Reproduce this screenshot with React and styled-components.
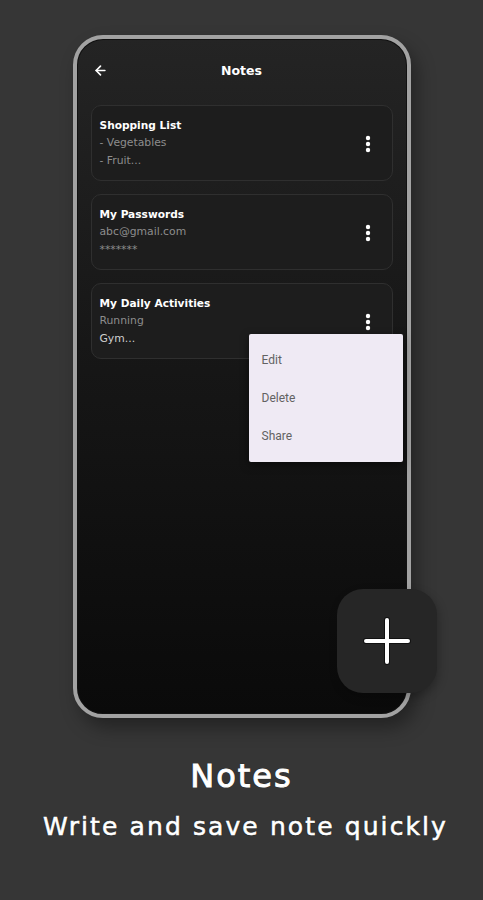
import React from "react";
import styled, { createGlobalStyle } from "styled-components";
import { ArrowLeft } from "lucide-react";

const Global = createGlobalStyle`
  html, body { margin: 0; padding: 0; background: #363636; }
  body { width: 483px; height: 900px; overflow: hidden; font-family: "DejaVu Sans", sans-serif; }
`;

const Page = styled.div`
  width: 483px;
  height: 900px;
  background: #363636;
  display: flex;
  flex-direction: column;
  align-items: center;
  padding-top: 35px;
  box-sizing: border-box;
`;

const PhoneWrap = styled.div`
  position: relative;
  width: 338px;
  height: 683px;
`;

const Phone = styled.div`
  position: relative;
  width: 100%;
  height: 100%;
  box-sizing: border-box;
  border: 4px solid #a2a2a2;
  border-radius: 30px;
  background: linear-gradient(180deg, #242424 0%, #171717 45%, #0a0a0a 100%);
  box-shadow: inset 0 0 0 1px #111, 6px 10px 18px rgba(0, 0, 0, 0.35);
  display: flex;
  flex-direction: column;
`;

const Header = styled.div`
  height: 62px;
  display: flex;
  align-items: center;
  justify-content: center;
  position: relative;
  color: #fff;
`;

const BackBtn = styled.div`
  position: absolute;
  left: 16px;
  top: 24px;
  display: flex;
  color: #fff;
`;

const HeaderTitle = styled.div`
  font-family: "DejaVu Sans", sans-serif;
  font-weight: 700;
  font-size: 12.5px;
  color: #fff;
`;

const List = styled.div`
  display: flex;
  flex-direction: column;
  gap: 13px;
  padding: 4px 14px 0;
`;

const Card = styled.div`
  display: flex;
  align-items: center;
  justify-content: space-between;
  background: #1d1d1d;
  border: 1px solid #2f2f2f;
  border-radius: 10px;
  padding: 11px 20px 10px 8px;
`;

const CardText = styled.div`
  display: flex;
  flex-direction: column;
`;

const CardTitle = styled.div`
  font-family: "DejaVu Sans", sans-serif;
  font-weight: 700;
  font-size: 10.6px;
  line-height: 17px;
  color: #fff;
`;

const CardLine = styled.div`
  font-family: "DejaVu Sans", sans-serif;
  font-size: 10.8px;
  line-height: 18px;
  color: ${(p) => (p.$light ? "#cfcfcf" : "#8d8d8d")};
`;

const Kebab = () => (
  <svg width="8" height="20" viewBox="0 0 8 20">
    <circle cx="4" cy="4" r="2.2" fill="#fff" />
    <circle cx="4" cy="10" r="2.2" fill="#fff" />
    <circle cx="4" cy="16" r="2.2" fill="#fff" />
  </svg>
);

const Menu = styled.div`
  position: absolute;
  left: 172px;
  top: 295px;
  width: 154px;
  height: 128px;
  background: #efeaf4;
  border-radius: 2px;
  box-shadow: 0 3px 8px rgba(0, 0, 0, 0.5);
  display: flex;
  flex-direction: column;
  padding-top: 7px;
  box-sizing: border-box;
`;

const MenuItem = styled.div`
  height: 38px;
  display: flex;
  align-items: center;
  padding-left: 13px;
  font-family: Roboto, "Noto Sans", sans-serif;
  font-size: 12px;
  color: #626262;
`;

const Fab = styled.div`
  position: absolute;
  left: 264px;
  top: 554px;
  width: 100px;
  height: 104px;
  border-radius: 26px;
  background: #262626;
  display: flex;
  align-items: center;
  justify-content: center;
  box-shadow: 2px 4px 10px rgba(0, 0, 0, 0.25);
`;

const Heading = styled.div`
  margin-top: 38px;
  font-family: "DejaVu Sans", sans-serif;
  font-size: 32px;
  line-height: 40px;
  letter-spacing: 2px;
  color: #fff;
  text-shadow: 0 0 1px #000, 0 0 1px #000;
  -webkit-text-stroke: 1px #fff;
`;

const Sub = styled.div`
  margin-top: 14px;
  padding-left: 8px;
  font-family: "DejaVu Sans", sans-serif;
  font-size: 25px;
  line-height: 34px;
  letter-spacing: 2.1px;
  color: #fff;
  text-shadow: 0 0 1px #000, 0 0 1px #000;
  -webkit-text-stroke: 0.6px #fff;
`;

const notes = [
  { title: "Shopping List", lines: ["- Vegetables", "- Fruit..."] },
  { title: "My Passwords", lines: ["abc@gmail.com", "*******"] },
  { title: "My Daily Activities", lines: ["Running", "Gym..."], light: true },
];

export default function App() {
  return (
    <>
      <Global />
      <Page>
        <PhoneWrap>
          <Phone>
            <Header>
              <BackBtn>
                <ArrowLeft size={15} strokeWidth={2.6} />
              </BackBtn>
              <HeaderTitle>Notes</HeaderTitle>
            </Header>
            <List>
              {notes.map((n) => (
                <Card key={n.title}>
                  <CardText>
                    <CardTitle>{n.title}</CardTitle>
                    <CardLine>{n.lines[0]}</CardLine>
                    <CardLine $light={n.light}>{n.lines[1]}</CardLine>
                  </CardText>
                  <Kebab />
                </Card>
              ))}
            </List>
            <Menu>
              <MenuItem>Edit</MenuItem>
              <MenuItem>Delete</MenuItem>
              <MenuItem>Share</MenuItem>
            </Menu>
          </Phone>
          <Fab>
            <svg width="48" height="48" viewBox="0 0 48 48">
              <path d="M24 3v42M3 24h42" stroke="#111" strokeWidth="6" strokeLinecap="round" />
              <path d="M24 3v42M3 24h42" stroke="#fff" strokeWidth="4" strokeLinecap="round" />
            </svg>
          </Fab>
        </PhoneWrap>
        <Heading>Notes</Heading>
        <Sub>Write and save note quickly</Sub>
      </Page>
    </>
  );
}
